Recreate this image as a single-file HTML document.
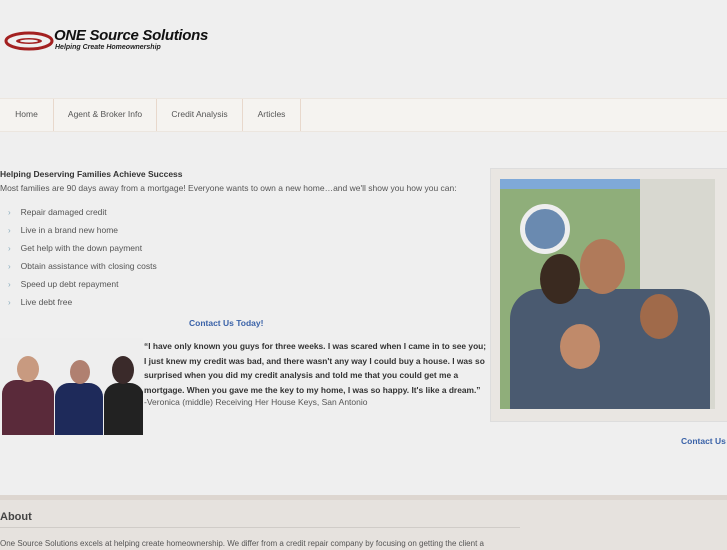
<!DOCTYPE html>
<html><head><style>
body{margin:0;width:727px;height:545px;overflow:hidden;background:#efefef;font-family:"Liberation Sans",sans-serif;color:#444;position:relative}
.a{position:absolute}
.nav{top:98px;left:0;width:727px;height:32px;background:#f5f3f0;border-top:1px solid #ece6df;border-bottom:1px solid #ece6df}
.nav div{position:absolute;top:0;height:32px;line-height:30px;font-size:8.5px;color:#555;text-align:center;border-right:1px solid #e8d8cc}
ul{margin:0;padding:0;list-style:none}
li{font-size:8.5px;height:18px;line-height:12px;color:#555}
li:before{content:"›";color:#8ab;margin:0 10px 0 8px;font-size:8px}
.q{white-space:nowrap}
</style></head><body>
<svg class="a" style="left:4px;top:31px" width="50" height="20"><ellipse cx="25" cy="10" rx="23" ry="8" fill="none" stroke="#a32020" stroke-width="3"/><ellipse cx="25" cy="10" rx="13" ry="3" fill="#a32020"/><ellipse cx="25" cy="10" rx="9" ry="1.5" fill="#eee"/></svg>
<div class="a" style="left:54px;top:27px;font:italic bold 15px 'Liberation Sans';color:#111;letter-spacing:-0.3px">ONE Source Solutions</div>
<div class="a" style="left:55px;top:44px;font:italic bold 7px 'Liberation Sans';color:#222">Helping Create Homeownership</div>
<div class="a nav"><div style="left:0;width:53px">Home</div><div style="left:54px;width:102px">Agent &amp; Broker Info</div><div style="left:157px;width:85px">Credit Analysis</div><div style="left:243px;width:57px">Articles</div></div>
<div class="a" style="left:0;top:169px;font-size:8.5px;font-weight:bold;color:#333">Helping Deserving Families Achieve Success</div>
<div class="a" style="left:0;top:183px;font-size:8.5px;color:#555">Most families are 90 days away from a mortgage! Everyone wants to own a new home…and we'll show you how you can:</div>
<ul class="a" style="left:0;top:206px"><li>Repair damaged credit</li><li>Live in a brand new home</li><li>Get help with the down payment</li><li>Obtain assistance with closing costs</li><li>Speed up debt repayment</li><li>Live debt free</li></ul>
<div class="a" style="left:189px;top:318px;font-size:8.5px;font-weight:bold;color:#3a62a8">Contact Us Today!</div>
<div class="a" style="left:0;top:338px;width:143px;height:97px;background:#eee;overflow:hidden">
<div class="a" style="left:2px;top:42px;width:52px;height:60px;background:#5a2a3a;border-radius:14px 14px 0 0"></div><div class="a" style="left:17px;top:18px;width:22px;height:26px;background:#c89a80;border-radius:50%"></div>
<div class="a" style="left:55px;top:45px;width:48px;height:60px;background:#1e2a5a;border-radius:14px 14px 0 0"></div><div class="a" style="left:70px;top:22px;width:20px;height:24px;background:#b08070;border-radius:50%"></div>
<div class="a" style="left:104px;top:45px;width:40px;height:60px;background:#222;border-radius:14px 14px 0 0"></div><div class="a" style="left:112px;top:18px;width:22px;height:28px;background:#3a2a2a;border-radius:50%"></div></div>
<div class="a" style="left:144px;top:339px;font-size:8.4px;font-weight:bold;line-height:14.5px;color:#333"><div class="q">“I have only known you guys for three weeks. I was scared when I came in to see you;</div><div class="q">I just knew my credit was bad, and there wasn't any way I could buy a house. I was so</div><div class="q">surprised when you did my credit analysis and told me that you could get me a</div><div class="q">mortgage. When you gave me the key to my home, I was so happy. It's like a dream.”</div></div>
<div class="a" style="left:144px;top:397px;font-size:8.5px;color:#555">-Veronica (middle) Receiving Her House Keys, San Antonio</div>
<div class="a" style="left:490px;top:168px;width:237px;height:252px;background:#e9e6e2;border:1px solid #ddd"></div>
<div class="a" style="left:500px;top:179px;width:215px;height:230px;background:#7fa9d8;overflow:hidden">
<div class="a" style="left:0;top:10px;width:140px;height:230px;background:#8fae7a"></div>
<div class="a" style="left:20px;top:25px;width:40px;height:40px;border-radius:50%;border:5px solid #eee;background:#6a8ab0"></div>
<div class="a" style="left:140px;top:0;width:75px;height:230px;background:#d8d8d0"></div>
<div class="a" style="left:10px;top:110px;width:200px;height:120px;background:#4a5a70;border-radius:30px 30px 0 0"></div>
<div class="a" style="left:40px;top:75px;width:40px;height:50px;background:#3a2a20;border-radius:50%"></div>
<div class="a" style="left:80px;top:60px;width:45px;height:55px;background:#b07a5a;border-radius:50%"></div>
<div class="a" style="left:60px;top:145px;width:40px;height:45px;background:#c08a6a;border-radius:50%"></div>
<div class="a" style="left:140px;top:115px;width:38px;height:45px;background:#a06a4a;border-radius:50%"></div></div>
<div class="a" style="left:681px;top:436px;font-size:8.5px;font-weight:bold;color:#3a62a8">Contact Us</div>
<div class="a" style="left:0;top:495px;width:727px;height:50px;background:#e6e2de;border-top:5px solid #ddd6d0"></div>
<div class="a" style="left:0;top:511px;font-size:11px;font-weight:bold;color:#444">About</div>
<div class="a" style="left:0;top:527px;width:520px;border-top:1px solid #d0ccc8"></div>
<div class="a" style="left:0;top:539px;font-size:8px;color:#555;white-space:nowrap">One Source Solutions excels at helping create homeownership. We differ from a credit repair company by focusing on getting the client a</div>
</body></html>
